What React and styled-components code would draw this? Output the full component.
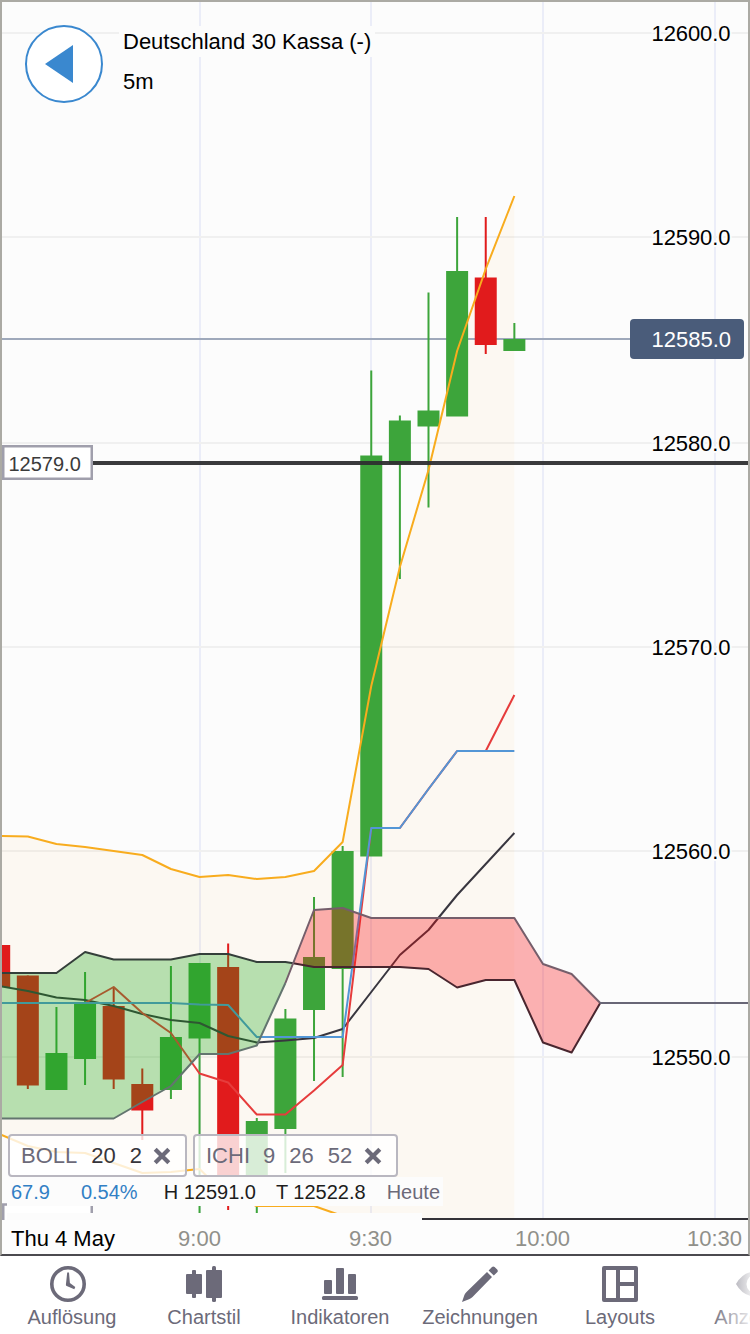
import React, { Component } from 'react';
import styled, { createGlobalStyle } from 'styled-components';

const GlobalStyle = createGlobalStyle`
  body {
    margin: 0;
    background: #fff;
    font-family: 'Liberation Sans', Arial, sans-serif;
  }
`;

const STEP = 28.62;
const xAt = i => -0.8 + i * STEP;

const priceTicks = [
  { label: '12600.0', y: 33 },
  { label: '12590.0', y: 237 },
  { label: '12580.0', y: 443 },
  { label: '12570.0', y: 647 },
  { label: '12560.0', y: 851 },
  { label: '12550.0', y: 1057 },
];

const timeTicks = [
  { label: '9:00', x: 200 },
  { label: '9:30', x: 371 },
  { label: '10:00', x: 543 },
  { label: '10:30', x: 715 },
];

// top and bottom of the body, then of the wick
const candles = [
  { body: [945, 987], wick: [945, 987], down: true },
  { body: [975.5, 1085.5], wick: [975.5, 1089], down: true },
  { body: [1053, 1090], wick: [1007, 1090] },
  { body: [1003, 1059], wick: [972, 1085] },
  { body: [1006, 1079.5], wick: [987, 1089], down: true },
  { body: [1084, 1110.5], wick: [1068.5, 1140], down: true },
  { body: [1037, 1090], wick: [966, 1099] },
  { body: [963, 1038.5], wick: [963, 1213] },
  { body: [967, 1200], wick: [943.5, 1210], down: true },
  { body: [1121, 1190], wick: [1118, 1213] },
  { body: [1018.5, 1129], wick: [1009, 1173] },
  { body: [957, 1010], wick: [897, 1081] },
  { body: [851, 969], wick: [846, 1077] },
  { body: [455.5, 856.5], wick: [370.5, 856] },
  { body: [420.5, 464], wick: [415.5, 579] },
  { body: [410.5, 426.5], wick: [292.5, 507.5] },
  { body: [271, 416.5], wick: [217, 416] },
  { body: [277.5, 345], wick: [217, 354], down: true },
  { body: [339, 351], wick: [323, 351] },
];

const upperBand = [
  836, 836.5, 844, 847, 851, 855, 869, 877, 875, 879,
  877, 871, 842, 686, 567, 470, 351, 269, 196,
];
const lowerBand = [
  1134, 1146, 1152, 1153, 1163, 1173, 1172, 1169, 1197, 1206,
  1206, 1206, 1216, 1300, 1300, 1300, 1300, 1300, 1300,
];
const middleBand = [
  986, 991, 997.5, 1000, 1006, 1014, 1020, 1023, 1036, 1042.5,
  1040.5, 1038, 1029, 992, 955, 930, 895, 864, 833,
];
const baseLine = [
  1003, 1003, 1003, 1003, 1003, 1003, 1003, 1004.5, 1005, 1037,
  1037, 1037, 1037, 828, 828, 789, 751, 751, 751,
];
const conversionLine = [
  1003, 987, 1013, 1033, 1073.5, 1082.5, 1114.5,
  1114.5, 1090.5, 1065, 828, 828, 789, 751, 751, 695,
];
const spanA = [
  1118.5, 1118.5, 1118.5, 1118.5, 1118.5, 1102, 1086, 1054, 1054, 1045.5, 983,
  910, 908, 918, 918, 918, 918, 918, 918, 964, 974, 1003,
];
const spanB = [
  973, 973, 973, 952, 959.5, 959.5, 959.5, 954, 954, 962, 962,
  967, 967, 967, 967, 969, 987.5, 980, 980, 1042.5, 1052.5, 1003,
];
const cross = '293.2,963.3';

const toPoints = (values, from = 0) =>
  values.map((y, i) => `${xAt(i + from)},${y}`);
const area = (a, b) => [...a, ...[...b].reverse()].join(' ');

const Candle = ({ index, body, wick, down }) => (
  <CandleGroup $down={down}>
    <rect x={xAt(index) - 1} y={wick[0]} width="2" height={wick[1] - wick[0]} />
    <rect x={xAt(index) - 11} y={body[0]} width="22" height={body[1] - body[0]} />
  </CandleGroup>
);

const Chart = () => {
  const a = toPoints(spanA);
  const b = toPoints(spanB);
  return (
    <ChartSvg viewBox="2 2 746 1252">
      <defs>
        <clipPath id="plot">
          <rect x="2" y="2" width="746" height="1217" />
        </clipPath>
      </defs>
      <g clipPath="url(#plot)">
        {timeTicks.map(t => (
          <rect key={t.x} x={t.x - 1} y="2" width="2" height="1217" fill="#ebedf8" />
        ))}
        {priceTicks.map(t => (
          <rect key={t.y} x="2" y={t.y - 1} width="746" height="2" fill="#f0f0f0" />
        ))}
        <polygon
          points={area(toPoints(upperBand), toPoints(lowerBand))}
          fill="rgba(255, 170, 20, 0.043)"
        />
        <rect x="2" y="338" width="630" height="2" fill="#9fa9bb" />
        {candles.map((c, i) => (
          <Candle key={i} index={i} {...c} />
        ))}
        <Line points={toPoints(upperBand).join(' ')} stroke="#f8ac1e" />
        <Line points={toPoints(lowerBand).join(' ')} stroke="#f8ac1e" />
        <Line points={toPoints(middleBand).join(' ')} stroke="#38363f" />
        <Line points={toPoints(conversionLine, 3).join(' ')} stroke="#e63c3c" />
        <Line points={toPoints(baseLine).join(' ')} stroke="#5396d6" />
        <polygon
          points={[...a.slice(0, 11), cross, ...b.slice(0, 11).reverse()].join(' ')}
          fill="rgba(22, 167, 19, 0.3)"
        />
        <polygon
          points={[cross, ...a.slice(11), ...b.slice(11).reverse()].join(' ')}
          fill="rgba(248, 8, 10, 0.31)"
        />
        <Line points={b.slice(0, 11).concat(cross).join(' ')} stroke="#343f3a" />
        <Line points={[cross].concat(b.slice(11)).join(' ')} stroke="#49262f" />
        <Line points={a.slice(0, 11).join(' ')} stroke="#63756f" />
        <Line points={a.slice(10).join(' ')} stroke="#755e6b" />
        <rect x="600" y="1002" width="148" height="2" fill="#686676" />
        <rect x="2" y="461" width="746" height="4" fill="#2e2e30" fillOpacity="0.94" />
      </g>

      {priceTicks.map(t => (
        <PriceText key={t.label} x="651.5" y={t.y + 8}>{t.label}</PriceText>
      ))}
      <rect x="630" y="319" width="114" height="40" rx="4" fill="#4a5c7a" />
      <AxisText x="651.5" y="347" $color="#fff">12585.0</AxisText>
      <rect x="3.25" y="446.25" width="88.5" height="32.5" fill="#fff" stroke="#a09fac" strokeWidth="2.5" />
      <AxisText x="8.5" y="471" $size={20} $color="#3b3b3b">12579.0</AxisText>

      <rect x="3.25" y="1204.5" width="88.5" height="32" fill="#fff" stroke="#a09fac" strokeWidth="2.5" />
      <rect x="7" y="1213" width="415" height="10" fill="#fcfcfc" />
      <rect x="2" y="1220" width="746" height="34" fill="#fdfdfd" />
      <rect x="422" y="1218" width="326" height="2" fill="#343238" />
      <AxisText x="11" y="1246">Thu 4 May</AxisText>
      {timeTicks.map(t => (
        <AxisText key={t.label} x={t.x - 0.5} y="1246" textAnchor="middle" $color="#90908a">
          {t.label}
        </AxisText>
      ))}
    </ChartSvg>
  );
};

const Cross = () => (
  <svg width="18" height="18" viewBox="0 0 18 18">
    <path d="M2.2 2.2L15.8 15.8M15.8 2.2L2.2 15.8" stroke="#6c6a79" strokeWidth="4.2" />
  </svg>
);

const ClockIcon = () => (
  <Icon viewBox="0 0 36 36">
    <circle cx="18" cy="18" r="16.2" fill="none" stroke="currentColor" strokeWidth="3.6" />
    <path d="M17.2 6.5h1.8l.9 10.6 5.4 3.8-1 2.4-7.6-3.2a1.3 1.3 0 0 1-.8-1.4z" />
  </Icon>
);

const CandlesIcon = () => (
  <Icon viewBox="0 0 36 36">
    <rect x="0" y="8" width="16" height="20" rx="1" />
    <rect x="6" y="4" width="4" height="28" rx="1" />
    <rect x="20" y="4" width="16" height="28" rx="1" />
    <rect x="26" y="0" width="4" height="36" rx="1.5" />
  </Icon>
);

const BarsIcon = () => (
  <Icon viewBox="0 0 36 36">
    <rect x="2" y="14" width="8" height="14" rx="1" />
    <rect x="14" y="2" width="8" height="26" rx="1" />
    <rect x="26" y="8" width="8" height="20" rx="1" />
    <rect x="0" y="30" width="36" height="4" rx="1.5" />
  </Icon>
);

const PencilIcon = () => (
  <Icon viewBox="0 0 36 36">
    <path d="M25 6L30 11L10.5 31Q9 32.5 7 33.2L0 36L2.4 29Q3 27.3 4.5 26Z" />
    <path d="M26.6 4.4L30 1Q31.2-.2 32.6 1L35.2 3.6Q36.4 5 35.2 6.2L31.8 9.6Z" />
  </Icon>
);

const LayoutIcon = () => (
  <Icon viewBox="0 0 36 36">
    <path
      fillRule="evenodd"
      d="M2 0H34Q36 0 36 2V34Q36 36 34 36H2Q0 36 0 34V2Q0 0 2 0ZM4 4V32H14V4ZM18 4V16H32V4ZM18 20V32H32V20Z"
    />
  </Icon>
);

const EyeIcon = () => (
  <Icon viewBox="0 0 36 36">
    <path
      fillRule="evenodd"
      d="M-2 18Q5 5.5 18 5.5T38 18Q31 30.5 18 30.5T-2 18ZM18 8.5A9.5 9.5 0 1 0 18 27.5A9.5 9.5 0 1 0 18 8.5Z"
    />
  </Icon>
);

const tabs = [
  { label: 'Auflösung', icon: ClockIcon, width: 144, shift: 8 },
  { label: 'Chartstil', icon: CandlesIcon, width: 120 },
  { label: 'Indikatoren', icon: BarsIcon, width: 152 },
  { label: 'Zeichnungen', icon: PencilIcon, width: 128 },
  { label: 'Layouts', icon: LayoutIcon, width: 152 },
  { label: 'Anzeigen', icon: EyeIcon, width: 120 },
];

class App extends Component {
  render() {
    return (
      <Screen>
        <GlobalStyle />
        <ChartPanel>
          <Chart />
          <Header>
            <BackButton aria-label="Zurück">
              <svg width="28" height="38" viewBox="0 0 28 38">
                <path d="M0 19L28 0V38Z" fill="#3a88cf" />
              </svg>
            </BackButton>
            <Titles>
              <Title>Deutschland 30 Kassa (-)</Title>
              <Title>5m</Title>
            </Titles>
          </Header>
          <Overlay>
            <Chips>
              <Chip $width={179}>
                <ChipValue $gap={14}>BOLL</ChipValue>
                <ChipValue $gap={14} $dark>20</ChipValue>
                <ChipValue $gap={11} $dark>2</ChipValue>
                <Cross />
              </Chip>
              <Chip $width={205}>
                <ChipValue $gap={13}>ICHI</ChipValue>
                <ChipValue $gap={14}>9</ChipValue>
                <ChipValue $gap={14}>26</ChipValue>
                <ChipValue $gap={12}>52</ChipValue>
                <Cross />
              </Chip>
            </Chips>
            <Stats>
              <Stat $gap={31} $color="#3280c5">67.9</Stat>
              <Stat $gap={26} $color="#3280c5">0.54%</Stat>
              <Stat $gap={20}>H 12591.0</Stat>
              <Stat $gap={21}>T 12522.8</Stat>
              <Stat $color="#6c6a79">Heute</Stat>
            </Stats>
          </Overlay>
        </ChartPanel>
        <Toolbar>
          {tabs.map(({ label, icon: TabIcon, width, shift }) => (
            <Tab key={label} $width={width}>
              <IconWrap $shift={shift}>
                <TabIcon />
              </IconWrap>
              {label}
            </Tab>
          ))}
          <Fade />
        </Toolbar>
      </Screen>
    );
  }
}

const Screen = styled.div`
  width: 750px;
  height: 1334px;
  overflow: hidden;
  display: flex;
  flex-direction: column;
  background: #fff;
`;
const ChartPanel = styled.div`
  position: relative;
  box-sizing: border-box;
  height: 1256px;
  border: 2px solid #abaaa4;
  border-bottom-color: #4b4a4f;
  background: #fcfcfc;
`;
const ChartSvg = styled.svg`
  display: block;
  width: 746px;
  height: 1252px;
`;
const CandleGroup = styled.g`
  fill: ${props => (props.$down ? '#e11b1c' : '#3da53b')};
`;
const Line = styled.polyline`
  fill: none;
  stroke-width: 2;
  stroke-linejoin: round;
`;
const AxisText = styled.text`
  font-size: ${props => props.$size || 22}px;
  fill: ${props => props.$color || '#000'};
`;
const PriceText = styled(AxisText)`
  letter-spacing: -0.1px;
  paint-order: stroke;
  stroke: #fcfcfc;
  stroke-width: 4px;
`;
const Header = styled.div`
  position: absolute;
  top: 23px;
  left: 23px;
  display: flex;
  gap: 16px;
`;
const BackButton = styled.button`
  box-sizing: border-box;
  width: 78px;
  height: 78px;
  padding: 0 10px 0 0;
  border: 2px solid #3a88cf;
  border-radius: 50%;
  background: #fff;
  display: flex;
  align-items: center;
  justify-content: center;
`;
const Titles = styled.div`
  display: flex;
  flex-direction: column;
  align-items: flex-start;
  gap: 9px;
  padding-top: 1px;
`;
const Title = styled.div`
  padding: 0 4px;
  background: #fcfcfc;
  font-size: 22px;
  line-height: 31px;
  white-space: nowrap;
`;
const Overlay = styled.div`
  position: absolute;
  left: 5px;
  top: 1132px;
`;
const Chips = styled.div`
  display: flex;
  gap: 6px;
  padding-left: 1px;
`;
const Chip = styled.div`
  box-sizing: border-box;
  width: ${props => props.$width}px;
  height: 43px;
  padding-left: 11px;
  border: 2px solid #b9b7c0;
  border-radius: 4px;
  background: rgba(255, 255, 255, 0.8);
  display: flex;
  align-items: center;
`;
const ChipValue = styled.span`
  margin-right: ${props => props.$gap}px;
  font-size: 22px;
  color: ${props => (props.$dark ? '#36353b' : '#6c6a79')};
`;
const Stats = styled.div`
  display: flex;
  width: 436px;
  height: 29px;
  box-sizing: border-box;
  padding-left: 4px;
  background: #fcfcfc;
  line-height: 30px;
`;
const Stat = styled.span`
  margin-right: ${props => props.$gap || 0}px;
  font-size: 20px;
  color: ${props => props.$color || '#1d1d1d'};
  white-space: nowrap;
`;
const Toolbar = styled.div`
  position: relative;
  flex: 1;
  display: flex;
  overflow: hidden;
`;
const Tab = styled.div`
  flex: none;
  width: ${props => props.$width}px;
  padding-top: 10px;
  display: flex;
  flex-direction: column;
  align-items: center;
  gap: 4px;
  color: #6c6a79;
  font-size: 20px;
  line-height: 23px;
`;
const IconWrap = styled.div`
  display: flex;
  padding-right: ${props => props.$shift || 0}px;
`;
const Icon = styled.svg`
  width: 36px;
  height: 36px;
  fill: currentColor;
  overflow: visible;
`;
const Fade = styled.div`
  position: absolute;
  top: 0;
  right: 0;
  width: 40px;
  height: 78px;
  background: linear-gradient(to right, rgba(255, 255, 255, 0), rgba(255, 255, 255, 0.85));
`;

export default App;
